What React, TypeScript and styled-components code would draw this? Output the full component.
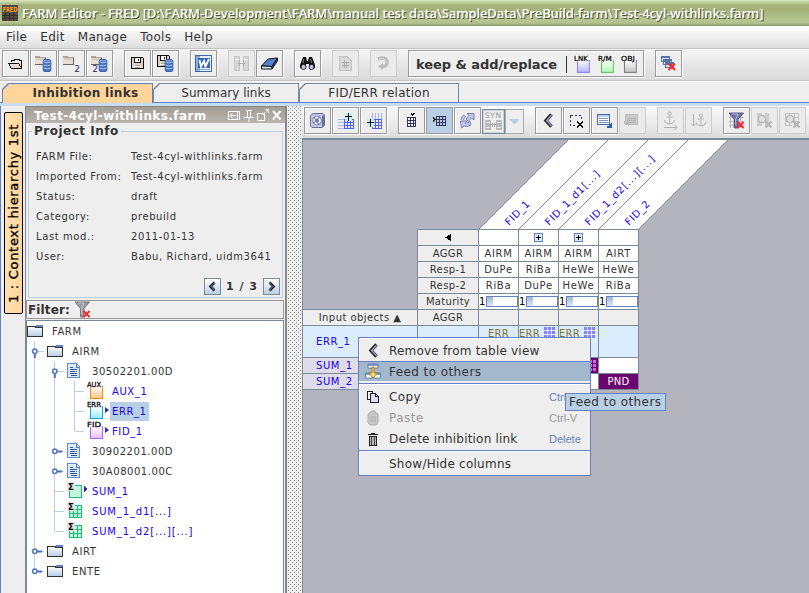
import React from 'react';
import styled, { createGlobalStyle, css } from 'styled-components';

const LINE = '#7a8a99';
const BLUE = '#6382bf';

const GlobalStyle = createGlobalStyle`
  * { box-sizing: border-box; }
  body { margin: 0; overflow: hidden; }
`;

const Window = styled.div`
  position: relative;
  width: 809px;
  height: 593px;
  overflow: hidden;
  display: flex;
  flex-direction: column;
  background: #eeeeee;
  color: #333333;
  font: 11px 'DejaVu Sans', sans-serif;
  white-space: pre;
  cursor: default;
`;

const Text = styled.span<{ $size?: number; $ls?: number; $bold?: boolean; $color?: string }>`
  font-size: ${(p) => p.$size ?? 11}px;
  letter-spacing: ${(p) => p.$ls ?? 0}px;
  font-weight: ${(p) => (p.$bold ? 700 : 400)};
  ${(p) => p.$color && `color: ${p.$color};`}
`;

/* ---------- title and menu ---------- */

const TitleBar = styled.header`
  display: flex;
  align-items: center;
  height: 26px;
  padding: 0 0 0 2px;
  gap: 4px;
  background: linear-gradient(#d9e5bb 0, #c4d3a0 2px, #a6b37c 5px, #a4b27a 10px, #b7c592 20px, #b3c28e 23px, #87966a 26px);
  color: #fff;
`;

const TitleText = styled.h1`
  margin: 0;
  font: 600 13px/20px 'Open Sans', sans-serif;
  letter-spacing: -0.13px;
  text-shadow: 1px 1px 0 #4b5530;
`;

const MenuBar = styled.nav`
  display: flex;
  height: 23px;
  padding: 3px 0 0 6px;
  gap: 13px;
  line-height: 16px;
  background: linear-gradient(#ffffff, #dedede);
  border-bottom: 1px solid #c4c4c4;
`;

/* ---------- toolbars ---------- */

const MainToolbar = styled.div`
  display: flex;
  height: 32px;
  padding: 1px 0 0 2px;
  gap: 11px;
  background: linear-gradient(#f4f4f4, #dadada);
  border-bottom: 1px solid #c4c4c4;
`;

const Group = styled.div`
  display: flex;
  gap: 1px;
`;

const ToolButton = styled.button<{ $disabled?: boolean; $pressed?: boolean }>`
  display: flex;
  align-items: center;
  justify-content: center;
  width: 27px;
  height: 27px;
  padding: 0;
  margin: 0;
  color: #333;
  background: #eeeeee;
  border: 1px solid #999999;
  box-shadow: 1px 1px 0 #fff, inset 1px 1px 0 #fff;
  ${(p) => p.$pressed && css`background: #b8cfe5; box-shadow: 1px 1px 0 #fff;`}
  ${(p) => p.$disabled && css`border-color: #cccccc; background: #ebebeb; box-shadow: none;`}
`;

const ModeButton = styled(ToolButton)`
  width: 236px;
  justify-content: flex-start;
  padding: 2px 0 0 7px;
  gap: 2px;
  font-family: inherit;
`;

const ModeDivider = styled.span`
  width: 1px;
  height: 17px;
  margin: 0 5px 0 7px;
  background: #333;
`;

/* ---------- tabs ---------- */

const TabStrip = styled.div`
  display: flex;
  height: 22px;
  padding: 1px 0 0 2px;
  border-bottom: 1px solid ${BLUE};
  border-top: 1px solid #fafafa;
`;

const TabShape = styled.div<{ $width: number; $active?: boolean }>`
  width: ${(p) => p.$width}px;
  height: ${(p) => (p.$active ? 20 : 19)}px;
  padding: 1px 1px 0 1px;
  background: ${(p) => (p.$active ? BLUE : LINE)};
  clip-path: polygon(0 6px, 6px 0, 100% 0, 100% 100%, 0 100%);
`;

const TabFace = styled.div<{ $active?: boolean }>`
  height: 100%;
  padding-left: ${(p) => (p.$active ? 16 : 0)}px;
  line-height: 18px;
  text-align: center;
  background: ${(p) => (p.$active ? '#ffd59c' : '#eeeeee')};
  clip-path: polygon(0 6px, 6px 0, 100% 0, 100% 100%, 0 100%);
`;

/* ---------- workspace ---------- */

const Workspace = styled.main`
  flex: 1;
  display: flex;
  min-height: 0;
  border-top: 3px solid #c8ddf2;
`;

const SideRail = styled.div`
  width: 25px;
  flex: none;
  padding: 6px 0 0 3px;
  border-left: 1px solid ${BLUE};
`;

const SideTab = styled.div`
  width: 19px;
  height: 202px;
  display: flex;
  align-items: center;
  justify-content: center;
  background: linear-gradient(90deg, #ffd59c, #ffe2b0);
  border: 1px solid #000;
  border-radius: 2px;
  color: #000;
  -webkit-text-stroke: 0.3px #000;
  writing-mode: vertical-rl;
  transform: rotate(180deg);
`;

const SidePanel = styled.section`
  width: 262px;
  flex: none;
  display: flex;
  flex-direction: column;
  border: 1px solid #888;
  border-bottom: 0;
  border-right-width: 2px;
`;

const PanelTitle = styled.div`
  height: 16px;
  flex: none;
  display: flex;
  align-items: center;
  justify-content: space-between;
  padding: 2px 4px 0 8px;
  background: linear-gradient(#a39d94, #b9b4ae);
`;

const InfoBox = styled.fieldset`
  margin: 1px 2px 0;
  padding: 0;
  height: 174px;
  flex: none;
  min-width: 0;
  border: 1px solid #b8cfe5;
  line-height: 15px;
`;

const InfoLegend = styled.legend`
  height: 15px;
  margin: 0 0 0 3px;
  padding: 0 2px;
  line-height: 15px;
`;

const InfoGrid = styled.dl`
  display: grid;
  grid-template-columns: 95px 1fr;
  grid-auto-rows: 20px;
  margin: 8px 0 0 7px;
  line-height: 20px;
`;

const InfoTerm = styled.dt`
  margin: 0;
`;

const InfoValue = styled.dd`
  margin: 0;
`;

const Pager = styled.div`
  display: flex;
  align-items: center;
  justify-content: flex-end;
  gap: 5px;
  margin: 11px 2px 0 0;
`;

const PagerButton = styled.button`
  width: 17px;
  height: 17px;
  padding: 0;
  display: flex;
  align-items: center;
  justify-content: center;
  border: 1px solid ${LINE};
  background: linear-gradient(#ffffff, #b8cfe5);
`;

const FilterBar = styled.div`
  display: flex;
  align-items: center;
  flex: none;
  height: 19px;
  margin: 2px 1px 1px 0;
  padding-left: 1px;
  gap: 4px;
  border: 1px solid #999;
`;

const Tree = styled.ul`
  flex: 1;
  list-style: none;
  margin: 0 1px 0 0;
  padding: 0;
  background: #fff;
  border: 1px solid ${LINE};
  border-bottom: 0;
`;

const TreeRow = styled.li`
  display: flex;
  align-items: center;
  height: 20px;
`;

const TreeLabel = styled.span<{ $link?: boolean; $selected?: boolean }>`
  padding: 0 2px;
  line-height: 19px;
  color: ${(p) => (p.$link ? '#1a00f0' : '#333')};
  ${(p) => p.$selected && 'background: #b8cfe5;'}
`;

const IconSlot = styled.span`
  width: 23px;
  height: 20px;
  flex: none;
  display: flex;
  align-items: center;
`;

const Splitter = styled.div`
  width: 15px;
  flex: none;
  background-color: #eee;
  background-image: radial-gradient(circle at 0.5px 0.5px, #868686 0.6px, transparent 0.7px),
    radial-gradient(circle at 2.5px 2.5px, #868686 0.6px, transparent 0.7px);
  background-size: 4px 4px;
  border: 1px solid #eee;
  border-width: 0 1px;
`;

const Editor = styled.section`
  flex: 1;
  display: flex;
  flex-direction: column;
  min-width: 0;
`;

const TableToolbar = styled.div`
  display: flex;
  height: 32px;
  padding: 1px 0 0 2px;
  gap: 11px;
  background: linear-gradient(#fbfbfb, #dcdcdc);
`;

const SyncGroup = styled.div`
  display: flex;
  height: 25px;
  width: 42px;
`;

const SyncPart = styled.button<{ $wide?: boolean }>`
  width: ${(p) => (p.$wide ? 23 : 19)}px;
  height: 25px;
  margin-top: 2px;
  padding: 0;
  display: flex;
  align-items: center;
  justify-content: center;
  background: #eee;
  border: 1px solid ${(p) => (p.$wide ? LINE : '#aaa')};
  box-shadow: ${(p) => (p.$wide ? 'inset 0 0 0 1px #c4d5e6' : 'none')};
`;

const Canvas = styled.div`
  flex: 1;
  background: #b4b4bf;
  border-top: 2px solid ${LINE};
  border-left: 1px solid ${LINE};
`;

const SlantedHeader = styled.svg`
  display: block;
  width: 426px;
  height: 90px;
`;

const Matrix = styled.div`
  display: grid;
  width: 336px;
  grid-template-columns: 115px 61px repeat(4, 40px);
  grid-template-rows: repeat(6, 16px) 32px 16px 16px;
`;

const Cell = styled.div<{ $bg?: string }>`
  display: flex;
  align-items: center;
  justify-content: center;
  overflow: hidden;
  min-width: 0;
  line-height: 13px;
  background: ${(p) => p.$bg ?? '#fff'};
  border-right: 1px solid ${LINE};
  border-bottom: 1px solid ${LINE};
`;

const RowName = styled(Cell)`
  justify-content: flex-start;
  padding-left: 13px;
  color: #1a00f0;
`;

const ErrCell = styled(Cell)<{ $center?: boolean }>`
  align-items: flex-start;
  justify-content: ${(p) => (p.$center ? 'center' : 'flex-start')};
  gap: 4px;
  padding-top: 1px;
  color: #7d7636;
`;

const DotsCell = styled(Cell)`
  justify-content: flex-end;
  padding-right: 2px;
`;

const Corner = styled.div`
  grid-row: 1 / 6;
  grid-column: 1;
  border-right: 1px solid ${LINE};
  border-bottom: 1px solid ${LINE};
`;

const PlusBox = styled.span`
  width: 9px;
  height: 9px;
  border: 1px solid ${BLUE};
  background: linear-gradient(#000, #000) center / 5px 1px no-repeat, linear-gradient(#000, #000) center / 1px 5px no-repeat, #dce8f5;
`;

const MaturityCell = styled(Cell)`
  gap: 1px;
  justify-content: flex-start;
  color: #000;
`;

const MaturityTrack = styled.span`
  flex: none;
  width: 32px;
  height: 11px;
  border: 1px solid ${BLUE};
  background: #fff;
`;

const MaturityFill = styled.span`
  display: block;
  width: 6px;
  height: 9px;
  background: linear-gradient(#a0b8d0, #e3ebf3);
`;

/* ---------- popup ---------- */

const ContextMenu = styled.div`
  position: absolute;
  left: 358px;
  top: 337px;
  width: 233px;
  height: 139px;
  border: 1px solid ${BLUE};
  background: #eee;
  box-shadow: inset 1px 1px 0 #fff;
  padding-top: 2px;
`;

const MenuItem = styled.div<{ $selected?: boolean; $disabled?: boolean }>`
  display: grid;
  grid-template-columns: 30px 160px 1fr;
  align-items: center;
  height: 21px;
  color: ${(p) => (p.$disabled ? '#999' : '#333')};
  ${(p) => p.$selected && css`
    height: 20px;
    background: #a3b8cc;
    border-top: 1px solid ${BLUE};
  `}
`;

const ItemIcon = styled.span`
  display: flex;
  width: 16px;
  height: 18px;
  margin-left: 6px;
  align-items: center;
  justify-content: center;
`;

const Shortcut = styled.span<{ $disabled?: boolean }>`
  font: 11px 'Liberation Sans', sans-serif;
  color: ${(p) => (p.$disabled ? '#999' : BLUE)};
`;

const MenuRule = styled.div<{ $top: number; $bottom: number }>`
  height: 2px;
  margin: ${(p) => p.$top}px 0 ${(p) => p.$bottom}px;
  border-top: 1px solid ${BLUE};
  background: #fff;
`;

const Tooltip = styled.div`
  position: absolute;
  left: 565px;
  top: 393px;
  width: 101px;
  height: 18px;
  padding-left: 3px;
  line-height: 17px;
  border: 1px solid ${BLUE};
  background: #b8cfe5;
`;

/* ---------- icons ---------- */

type SvgProps = { w?: number; h?: number; children: React.ReactNode };
const Glyph = ({ w = 17, h = 17, children }: SvgProps) => (
  <svg width={w} height={h} viewBox={`0 0 ${w} ${h}`} shapeRendering="crispEdges" fill="none">
    {children}
  </svg>
);

const Smooth = ({ w = 17, h = 17, children }: SvgProps) => (
  <svg width={w} height={h} viewBox={`0 0 ${w} ${h}`} fill="none">
    {children}
  </svg>
);

const Drum = ({ x = 8, y = 4 }: { x?: number; y?: number }) => (
  <g transform={`translate(${x} ${y})`}>
    <path d="M0 2Q0 0 4 0T8 2V11Q8 13 4 13T0 11Z" fill="#4a72bf" stroke="#2c4f93" strokeWidth=".6" />
    <path d="M.5 3Q4 4.800 7.500 3M.5 6Q4 7.800 7.500 6M.5 9Q4 10.800 7.500 9" stroke="#a6c2ee" strokeWidth="1" />
    <path d="M1 1.800H7" stroke="#8fb0e6" />
  </g>
);

const SmallFolder = () => (
  <g shapeRendering="crispEdges">
    <path d="M0 1H6V2H11V10H0Z" fill="#eaddd5" />
    <path d="M0 9V1H5V2H11V3H0" fill="#b3a49b" />
    <path d="M1 3H10V5H1Z" fill="#d9cac0" />
    <path d="M10.500 3V9.500H0" stroke="#666" />
  </g>
);

const OpenFolder = () => (
  <Glyph w={15} h={13}>
    <path d="M4 4H7V3H12V5H13V11H3V9H1V6H11V4" fill="#e9ddd5" />
    <path d="M3.500 5V3.500H6.500V2.500H11.500V3.500H13.500V11.500H3.500L.5 6.500H10.500L13.500 11" stroke="#111" />
  </Glyph>
);

const SubDigit = ({ x }: { x: number }) => (
  <text x={x} y={17} fontSize="8.500" fill="#222266" fontFamily="DejaVu Sans">2</text>
);

const FolderDb = () => <Smooth><SmallFolder /><Drum /></Smooth>;
const FolderTwo = () => <Smooth><SmallFolder /><SubDigit x={11.5} /></Smooth>;
const FolderTwoDb = () => <Smooth><SmallFolder /><Drum /><SubDigit x={1.5} /></Smooth>;

const Floppy = () => (
  <g shapeRendering="crispEdges">
    <path d="M.5 .5H11.500L12.500 1.500V11.500H.5Z" fill="#dfd0c6" stroke="#111" />
    <path d="M3.500 .5H9.500V5.500H3.500Z" fill="#fff" stroke="#111" />
    <path d="M7 2H8V4H7Z" fill="#111" />
    <path d="M3 8H10V11H3Z" fill="#f6efeb" />
    <path d="M4 8.500H9M4 10.500H9" stroke="#aaa" />
  </g>
);
const Save = () => <Glyph w={13} h={13}><Floppy /></Glyph>;
const SaveDb = () => <Smooth><Floppy /><Drum /></Smooth>;

const Word = () => (
  <Smooth>
    <rect x=".5" y=".5" width="16" height="16" fill="#e8f0fa" stroke="#3d67ae" />
    <rect x="1" y="1" width="4" height="15" fill="#8badde" />
    <path d="M3 3H15V13H3Z" fill="#3766b6" />
    <path d="M4.500 5L6 11.500L9 6L10.500 11.500L14 4" stroke="#fff" strokeWidth="1.900" />
    <path d="M4 14.500H15" stroke="#85a7da" />
  </Smooth>
);

const GrayLink = () => (
  <Glyph>
    <path d="M1.500 1.500H6.500V15.500H1.500ZM10.500 1.500H15.500V15.500H10.500Z" fill="#d6d6d6" stroke="#c6c6c6" />
    <path d="M5 8.500H12M6.500 6V11M10.500 6V11" stroke="#b0b0b0" />
    <path d="M2 4.500H6M11 4.500H15" stroke="#eee" />
  </Glyph>
);

const Eraser = () => (
  <Smooth>
    <path d="M.5 11L7 4L16.500 3L11 11.500Z" fill="#5482ce" stroke="#111" />
    <path d="M.5 11L11 11.500V14H.5Z" fill="#dce7f8" stroke="#111" />
    <path d="M11 11.500L16.500 3V6L11 14Z" fill="#335ba5" stroke="#111" />
  </Smooth>
);

const Binoculars = () => (
  <Smooth w={15} h={15}>
    <path d="M3 1H6L7 5H8L9 1H12L15 9V12H9V8H6V12H0V9Z" fill="#111" />
    <circle cx="3.500" cy="11" r="2.500" fill="#c9c9ee" stroke="#222" />
    <circle cx="11.500" cy="11" r="2.500" fill="#c9c9ee" stroke="#222" />
    <path d="M4 3L3 7M10.500 3L11.500 7" stroke="#888" />
  </Smooth>
);

const GrayPage = () => (
  <Glyph w={15} h={15}>
    <path d="M1.500 .5H9.500L13.500 4.500V14.500H1.500Z" fill="#d9d9d9" stroke="#c2c2c2" />
    <path d="M4 6.500H11M4 9.500H11M6.500 4V12M8.500 6V12" stroke="#acacac" />
  </Glyph>
);

const GrayRedo = () => (
  <Smooth w={15} h={15}>
    <path d="M2 3Q11 0 11 6.500Q11 11 6 10.500" stroke="#bcbcbc" strokeWidth="3.500" />
    <path d="M7 7V14L2 10.500Z" fill="#bcbcbc" />
    <path d="M3 3Q10 1 10.500 7" stroke="#dcdcdc" />
  </Smooth>
);

const Tagged = ({ tag, fill, line, arrow }: { tag: string; fill: string; line: string; arrow?: boolean }) => (
  <svg width="22" height="20" viewBox="0 0 22 20">
    <defs>
      <linearGradient id={`g-${tag[0]}${tag[1]}`} x2="0" y2="1">
        <stop stopColor="#fff" />
        <stop offset="1" stopColor={fill} />
      </linearGradient>
    </defs>
    <rect x="3.500" y="5.500" width="12" height="12" fill={`url(#g-${tag[0]}${tag[1]})`} stroke={line} />
    <path d="M0 0H15V6H0Z" fill="#fff" fillOpacity=".75" />
    <text x="0" y="6" fontSize="7" fill="#000" stroke="#000" strokeWidth=".25" fontFamily="DejaVu Sans" textLength="14" lengthAdjust="spacingAndGlyphs">{tag}</text>
    {arrow && <path d="M18 6V12L22 9Z" fill="#2b2bb5" />}
  </svg>
);

const CloseAll = () => (
  <Glyph w={15} h={15}>
    <path d="M.5 .5H8.500V5.500H.5ZM2.500 3.500H10.500V8.500H2.500ZM4.500 6.500H12.500V11.500H4.500Z" fill="#d6e3f4" stroke="#5274aa" />
    <path d="M0 1.500H8M2 4.500H10M4 7.500H12" stroke="#5274aa" />
    <path d="M7.500 7.500L14 14M14 7.500L7.500 14" stroke="#f22" strokeWidth="2" shapeRendering="auto" />
  </Glyph>
);

const Reload = () => (
  <Smooth>
    <path d="M1.500 3.500L4 1.500H14L15.500 3V13.500L13 15.500H3L1.500 14Z" fill="#c3c6e4" stroke="#6c7094" />
    <path d="M13 4L15 3V13.500L13 15Z" fill="#6c7094" />
    <circle cx="8" cy="8.500" r="4.800" fill="#767da8" />
    <circle cx="8" cy="8.500" r="3" stroke="#f2f2ff" strokeWidth="1.800" strokeDasharray="3 1" />
  </Smooth>
);

const GridPlus = ({ left }: { left?: boolean }) => (
  <Glyph>
    <path d={left ? 'M7.500 1V8M10.500 1V8M13.500 1V8M16.500 1V8' : 'M1 7.500H7M1 10.500H7M1 13.500H7M1 16.500H7'} stroke="#a3b4ff" />
    <path d="M7 7.500H17M7 10.500H17M7 13.500H17M7 16.500H17M7.500 7V17M10.500 7V17M13.500 7V17M16.500 7V17" stroke="#5060f4" />
    <g transform={left ? 'translate(-6 6)' : 'translate(0 0)'}>
      <path d="M8 1H15V9H8Z" fill="#c7eef5" />
      <path d="M11.500 1V9M8 4.500H15" stroke="#111" />
    </g>
  </Glyph>
);

const TableCol = () => (
  <Glyph w={15} h={15}>
    <path d="M3.500 4.500H11.500V13.500H3.500ZM6.500 4V14M9.500 4V14M3 7.500H12M3 10.500H12" stroke="#33335c" />
    <path d="M7 0H8V1H9V0H11V1H10V2H9V3H8V2H7Z" fill="#000" />
  </Glyph>
);

const TableRowIcon = () => (
  <Glyph w={15} h={13}>
    <path d="M4.500 2.500H13.500V11.500H4.500ZM7.500 3V12M10.500 3V12M4 5.500H14M4 8.500H14" stroke="#33335c" />
    <path d="M1 3H2V4H3V5H4V6H3V7H2V8H1V6H2V5H1Z" fill="#000" />
  </Glyph>
);

const Sync = () => (
  <Smooth>
    <path d="M8 1.500H15V8L12.800 6Q10 7.500 9.500 9.500L7 7Q8 5 10 3.500Z" fill="#c2c6ea" stroke="#7a7eaf" />
    <path d="M1.500 9H8L6.500 11Q9 11.500 11 9.500L12 13Q9 15.500 5 14L2.500 16Z" fill="#c2c6ea" stroke="#7a7eaf" />
    <path d="M2 8Q2 4 5 3L6.500 5Q4.500 6 4.500 8" fill="#c2c6ea" stroke="#7a7eaf" strokeWidth=".8" />
  </Smooth>
);

const SynIcon = () => (
  <Glyph w={17} h={21}>
    <text x="0" y="7" fontSize="7.500" fill="#aaa" stroke="#aaa" strokeWidth=".2" fontFamily="DejaVu Sans" textLength="16">SYN</text>
    <path d="M0 9H6V19H0ZM11 9H17V19H11Z" fill="#bababa" />
    <path d="M1 11.500H5M1 16.500H5M12 11.500H16M12 16.500H16" stroke="#e5e5e5" />
    <path d="M5 13.500H12M7.500 12V16M9.500 12V16" stroke="#aaa" />
  </Glyph>
);

const Chevron = () => (
  <svg width="11" height="15" viewBox="0 0 11 15" fill="none">
    <path d="M8.500 1.500L3 7.500L8.500 13.500" stroke="#222" strokeWidth="3.400" />
    <path d="M8.500 2.200L3.700 7.500L8.500 12.800" stroke="#9c9cc8" strokeWidth="1.500" />
  </svg>
);

const SmallChevron = ({ right }: { right?: boolean }) => (
  <svg width="9" height="11" viewBox="0 0 9 11" fill="none">
    <g transform={right ? 'matrix(-1 0 0 1 9 0)' : undefined}>
      <path d="M6.500 1.500L2.500 5.500L6.500 9.500" stroke="#111" strokeWidth="2.600" />
      <path d="M6.500 2L3 5.500L6.500 9" stroke="#8a8ac0" strokeWidth="1" />
    </g>
  </svg>
);

const Deselect = () => (
  <Glyph>
    <rect x="2.500" y="3.500" width="11" height="10" stroke="#33335c" strokeDasharray="2 2" />
    <path d="M8 9H16V16H8Z" fill="#eee" />
    <path d="M9 9.500L15 15.500M15 9.500L9 15.500" stroke="#000" strokeWidth="1.800" />
  </Glyph>
);

const ListIcon = ({ gray }: { gray?: boolean }) => (
  <Glyph>
    <path d="M1.500 2.500H13.500V12.500H1.500Z" fill={gray ? '#cacaca' : '#fff'} stroke={gray ? '#bdbdbd' : '#46689f'} />
    {!gray && <path d="M2 3H13V5H2Z" fill="#b5cdf0" />}
    <path d="M3 6.500H12M3 8.500H12M3 10.500H12" stroke={gray ? '#b4b4b4' : '#7892bc'} />
    {gray ? <path d="M0 9H4V6L5 6V14H4V12H0Z" fill="#bdbdbd" /> : <path d="M16 11V16H11V14H13V12Z" fill="#2c60aa" />}
  </Glyph>
);

const Anchor = ({ down }: { down?: boolean }) => (
  <Smooth w={17} h={19}>
    <g transform={down ? 'translate(3 2)' : 'translate(-.5 0)'} stroke="#bcbcbc" strokeWidth="1.200">
      <circle cx="8" cy="2.500" r="1.500" />
      <path d="M8 4V13M5 6H11M3 9Q3.500 12.500 8 12.800Q12.500 12.500 13 9" />
    </g>
    <path d={down ? 'M3.500 3V15M1 12.500L3.500 15L6 12.500' : 'M2 16.500H15M12.500 14L15 16.500L12.500 19'} stroke="#b2b2b2" />
  </Smooth>
);

const Funnel = ({ grid }: { grid?: boolean }) => (
  <svg width="17" height="17" viewBox="0 0 17 17" fill="none">
    {grid && <path d="M1 5.500H16M1 9.500H16M1 13.500H16M2.500 2V16M5.500 2V16M12.500 2V16" stroke="#b9b9b9" />}
    <path d="M1 1H15.500L10 7.500V16H6.500V7.500Z" fill={grid ? '#7474a8' : '#9a9aa5'} stroke={grid ? '#3c3c77' : '#666'} strokeWidth=".8" />
    <path d="M4 2H10L7.700 7V13" stroke="#e2e2ee" strokeOpacity=".6" strokeWidth="1" />
    <path d="M9.500 10L15.500 16M15.500 10L9.500 16" stroke="#f22" strokeWidth="1.900" />
  </svg>
);

const GraySearch = ({ grid }: { grid?: boolean }) => (
  <Smooth>
    {grid ? <path d="M1 1.500H15M1 5.500H15M1 9.500H15M1 13.500H8M1.500 2V14M5.500 2V14M10.500 2V14M14.500 2V8" stroke="#c2c2c2" /> : <path d="M1 1H6V14H1ZM9 1H13V14H9Z" fill="#cecece" />}
    <circle cx="6" cy="7" r="3.500" fill="#e0e0e0" stroke="#b5b5b5" strokeWidth="1.200" />
    <path d="M9.500 9.500L15.500 15.500M15.500 9.500L9.500 15.500" stroke="#b5b5b5" strokeWidth="2.200" />
  </Smooth>
);

const AppLogo = () => (
  <svg width="16" height="16" viewBox="0 0 16 16">
    <rect width="16" height="16" fill="#514b44" />
    <path d="M0 10.500H16M0 13.500H16M3.500 8V16M7.500 8V16M11.500 8V16" stroke="#33302c" />
    <text x=".5" y="7" fontSize="7" fontWeight="700" fill="#ff981c" fontFamily="DejaVu Sans" textLength="15" lengthAdjust="spacingAndGlyphs">FRED</text>
  </svg>
);

const PanelControls = () => (
  <svg width="54" height="14" viewBox="0 0 54 14" fill="none" stroke="#fff">
    <path d="M1.500 2.500H12.500V10.500H1.500ZM10.500 2V11M3 6.500H9M5.500 4L3 6.500L5.500 9" />
    <path d="M19 1.500H25M20.500 2V8M23.500 2V8M17 8.500H27M22 9V13" />
    <path d="M30.500 4.500H37.500V11.500H30.500ZM36 6L41 1M38 .5H41.500V4" />
    <path d="M46 2L53.500 10.500M53.500 2L46 10.500" strokeWidth="2" />
  </svg>
);

const FolderIcon = () => (
  <Glyph w={17} h={15}>
    <defs>
      <linearGradient id="folder" x2="0" y2="1"><stop stopColor="#fff" /><stop offset="1" stopColor="#b5cbe4" /></linearGradient>
    </defs>
    <path d="M.5 2.500H7.500L9.500 3.500H15.500V12.500H.5Z" fill="url(#folder)" stroke="#333" />
    <path d="M9 1H16V3H9Z" fill={BLUE} />
  </Glyph>
);

const DocIcon = () => (
  <Glyph w={14} h={16}>
    <path d="M.5 .5H9.500L12.500 3.500V14.500H.5Z" fill="#dce9fa" stroke="#5d8bd2" />
    <path d="M9.500 1V4H12" stroke="#4d7fcc" />
    <path d="M3 4.500H6M3 6.500H10M3 8.500H8M9 8.500H10M3 10.500H10M4 12.500H10" stroke="#2b52a3" />
  </Glyph>
);

const SumIcon = ({ grid }: { grid?: boolean }) => (
  <Glyph w={21} h={18}>
    <rect x="2.500" y="3.500" width="12" height="12" fill="#c2f8dc" stroke="#14bd78" />
    {grid && <path d="M3 7.500H15M3 11.500H15M6.500 4V16M10.500 4V16" stroke="#14bd78" />}
    <rect x="0" y="0" width="8" height="9" fill="#e4e4e4" />
    <text x="1" y="7.500" fontSize="8.500" fontWeight="700" fill="#000" fontFamily="DejaVu Sans">Σ</text>
    {!grid && <path d="M17 4V10L21 7Z" fill="#2b2bb5" />}
  </Glyph>
);

const Dots = ({ color = '#8a80f5', w = 11 }: { color?: string; w?: number }) => (
  <Glyph w={w} h={11}>
    {[0, 4, 8].map((y) => [0, 4, 8].map((x) => <rect key={`${x}-${y}`} x={x} y={y} width="3" height="3" fill={color} />))}
  </Glyph>
);

const FeedIcon = () => (
  <Smooth w={16} h={18}>
    <path d="M3 1H13V5H3ZM.5 10H7V15H.5ZM9 10H15.500V15H9Z" fill="#fff" stroke="#4d719f" strokeWidth=".8" />
    <path d="M3 2H13M0 11H7M9 11H16" stroke="#537cb5" strokeWidth="1.500" />
    <path d="M7 4H9V10H12L8 15L4 10H7Z" fill="#ffe27a" stroke="#b67d10" />
  </Smooth>
);

const CopyIcon = () => (
  <Glyph w={14} h={14}>
    <path d="M1.500 1.500H6.500V9.500H1.500Z" fill="#fff" stroke="#222" />
    <path d="M4.500 3.500H9.500L12.500 6.500V12.500H4.500Z" fill="#dcdcf2" stroke="#222" />
    <path d="M9.500 3V6.500H13" stroke="#222" />
  </Glyph>
);

const PasteIcon = () => (
  <Smooth w={12} h={16}>
    <path d="M1 4L4 2V1H8V2L11 4V13L9 15H3L1 13Z" fill="#c6c6c6" stroke="#b0b0b0" />
    <path d="M3 7H9M3 9H9M3 11H9" stroke="#b2b2b2" />
  </Smooth>
);

const TrashIcon = () => (
  <Glyph w={12} h={14}>
    <path d="M1 2.500H11M4 1.500H8" stroke="#222" />
    <path d="M2.500 4.500H9.500V13H2.500Z" fill="#bbb" stroke="#222" />
    <path d="M4.500 5V13M7.500 5V13" stroke="#444" />
  </Glyph>
);

/* ---------- tree ---------- */

type Guide = 'line' | 'tee' | 'end' | 'open' | 'shut' | 'shutEnd';

const GuideCell = ({ kind }: { kind: Guide }) => (
  <svg width="20" height="20" viewBox="0 0 20 20" fill="none">
    <path d={kind === 'end' || kind === 'shutEnd' ? 'M7.500 0V10' : 'M7.500 0V20'} stroke="#b8cfe5" />
    {kind !== 'line' && <path d="M8 10.500H17" stroke="#b8cfe5" />}
    {(kind === 'open' || kind === 'shut' || kind === 'shutEnd') && (
      <>
        <path d={kind === 'open' ? 'M7.800 12V17' : 'M10 10.500H15'} stroke="#4d6fb5" strokeWidth="2" />
        <circle cx="7.800" cy="10.300" r="2.200" fill="#fff" stroke="#5a7dc0" strokeWidth="1.700" />
      </>
    )}
  </svg>
);

type Node = { guides: Guide[]; icon: React.ReactNode; label: string; link?: boolean; selected?: boolean; ls?: number };

const nodes: Node[] = [
  { guides: [], icon: <FolderIcon />, label: 'FARM' },
  { guides: ['open'], icon: <FolderIcon />, label: 'AIRM' },
  { guides: ['line', 'open'], icon: <DocIcon />, label: '30502201.00D', ls: 0.55 },
  { guides: ['line', 'line', 'tee'], icon: <Tagged tag="AUX" fill="#ffc680" line="#f08a20" />, label: 'AUX_1', link: true },
  { guides: ['line', 'line', 'tee'], icon: <Tagged tag="ERR" fill="#9eeaff" line="#10a4dc" arrow />, label: 'ERR_1', link: true, selected: true },
  { guides: ['line', 'line', 'end'], icon: <Tagged tag="FID" fill="#e4bcff" line="#a866ee" arrow />, label: 'FID_1', link: true },
  { guides: ['line', 'shut'], icon: <DocIcon />, label: '30902201.00D', ls: 0.55 },
  { guides: ['line', 'shut'], icon: <DocIcon />, label: '30A08001.00C', ls: 0.55 },
  { guides: ['line', 'tee'], icon: <SumIcon />, label: 'SUM_1', link: true },
  { guides: ['line', 'tee'], icon: <SumIcon grid />, label: 'SUM_1_d1[...]', link: true, ls: 0.85 },
  { guides: ['line', 'end'], icon: <SumIcon grid />, label: 'SUM_1_d2[...][...]', link: true, ls: 0.85 },
  { guides: ['shut'], icon: <FolderIcon />, label: 'AIRT' },
  { guides: ['shutEnd'], icon: <FolderIcon />, label: 'ENTE' },
];

const info: [string, string][] = [
  ['FARM File:', 'Test-4cyl-withlinks.farm'],
  ['Imported From:', 'Test-4cyl-withlinks.farm'],
  ['Status:', 'draft'],
  ['Category:', 'prebuild'],
  ['Last mod.:', '2011-01-13'],
  ['User:', 'Babu, Richard, uidm3641'],
];

const headerRows: [string, string[]][] = [
  ['AGGR', ['AIRM', 'AIRM', 'AIRM', 'AIRT']],
  ['Resp-1', ['DuPe', 'RiBa', 'HeWe', 'HeWe']],
  ['Resp-2', ['RiBa', 'DuPe', 'HeWe', 'RiBa']],
];

const slanted = ['FID_1', 'FID_1_d1[...]', 'FID_1_d2[...][...]', 'FID_2'];

const GRAY = '#eeeeee';
const SKY = '#dbecfc';
const LILAC = '#dedce8';
const PURPLE = '#6b0570';

export default function App() {
  return (
    <Window>
      <GlobalStyle />
      <TitleBar>
        <AppLogo />
        <TitleText>FARM Editor - FRED [D:\FARM-Development\FARM\manual test data\SampleData\PreBuild-farm\Test-4cyl-withlinks.farm]</TitleText>
      </TitleBar>
      <MenuBar>
        {['File', 'Edit', 'Manage', 'Tools', 'Help'].map((m) => <Text key={m} $size={12} $ls={0.3}>{m}</Text>)}
      </MenuBar>
      <MainToolbar>
        <Group>
          <ToolButton><OpenFolder /></ToolButton>
          <ToolButton><FolderDb /></ToolButton>
          <ToolButton><FolderTwo /></ToolButton>
          <ToolButton><FolderTwoDb /></ToolButton>
        </Group>
        <Group>
          <ToolButton><Save /></ToolButton>
          <ToolButton><SaveDb /></ToolButton>
        </Group>
        <ToolButton><Word /></ToolButton>
        <Group>
          <ToolButton $disabled><GrayLink /></ToolButton>
          <ToolButton><Eraser /></ToolButton>
        </Group>
        <ToolButton><Binoculars /></ToolButton>
        <ToolButton $disabled><GrayPage /></ToolButton>
        <ToolButton $disabled><GrayRedo /></ToolButton>
        <ModeButton>
          <Text $size={13} $bold $ls={-0.06}>keep &amp; add/replace</Text>
          <ModeDivider />
          <Tagged tag="LNK" fill="#b0b0ff" line="#8080e8" />
          <Tagged tag="R/M" fill="#aaf5aa" line="#55bb66" />
          <Tagged tag="OBJ" fill="#c0c0c0" line="#777777" />
        </ModeButton>
        <ToolButton><CloseAll /></ToolButton>
      </MainToolbar>
      <TabStrip>
        <TabShape $width={151} $active><TabFace $active><Text $size={12} $bold $ls={0.3}>Inhibition links</Text></TabFace></TabShape>
        <TabShape $width={146}><TabFace><Text $size={12}>Summary links</Text></TabFace></TabShape>
        <TabShape $width={160}><TabFace><Text $size={12} $ls={0.25}>FID/ERR relation</Text></TabFace></TabShape>
      </TabStrip>
      <Workspace>
        <SideRail>
          <SideTab><Text $size={13} $ls={0.7}>1 : Context hierarchy 1st</Text></SideTab>
        </SideRail>
        <SidePanel>
          <PanelTitle>
            <Text $size={12} $bold $ls={0.42} $color="#fff">Test-4cyl-withlinks.farm</Text>
            <PanelControls />
          </PanelTitle>
          <InfoBox>
            <InfoLegend><Text $size={12} $bold $ls={0.5}>Project Info</Text></InfoLegend>
            <InfoGrid>
              {info.map(([k, v]) => (
                <React.Fragment key={k}>
                  <InfoTerm><Text $size={10} $ls={0.6}>{k}</Text></InfoTerm>
                  <InfoValue><Text $size={10} $ls={0.58}>{v}</Text></InfoValue>
                </React.Fragment>
              ))}
            </InfoGrid>
            <Pager>
              <PagerButton><SmallChevron /></PagerButton>
              <Text $size={11} $bold $ls={1}>1 / 3</Text>
              <PagerButton><SmallChevron right /></PagerButton>
            </Pager>
          </InfoBox>
          <FilterBar>
            <Text $size={12} $bold $ls={0.15}>Filter:</Text>
            <Funnel />
          </FilterBar>
          <Tree>
            {nodes.map((n) => (
              <TreeRow key={n.label}>
                {n.guides.map((g, i) => <GuideCell key={i} kind={g} />)}
                <IconSlot>{n.icon}</IconSlot>
                <TreeLabel $link={n.link} $selected={n.selected}><Text $size={10} $ls={n.ls ?? 0.6}>{n.label}</Text></TreeLabel>
              </TreeRow>
            ))}
          </Tree>
        </SidePanel>
        <Splitter />
        <Editor>
          <TableToolbar>
            <Group>
              <ToolButton><Reload /></ToolButton>
              <ToolButton><GridPlus /></ToolButton>
              <ToolButton><GridPlus left /></ToolButton>
            </Group>
            <Group>
              <ToolButton><TableCol /></ToolButton>
              <ToolButton $pressed><TableRowIcon /></ToolButton>
              <ToolButton><Sync /></ToolButton>
              <SyncGroup>
                <SyncPart $wide><SynIcon /></SyncPart>
                <SyncPart>
                  <Smooth w={11} h={6}><path d="M0 0H11L5.500 5.500Z" fill="#b8cfe5" /></Smooth>
                </SyncPart>
              </SyncGroup>
            </Group>
            <Group>
              <ToolButton><Chevron /></ToolButton>
              <ToolButton><Deselect /></ToolButton>
              <ToolButton><ListIcon /></ToolButton>
              <ToolButton $disabled><ListIcon gray /></ToolButton>
            </Group>
            <Group>
              <ToolButton $disabled><Anchor /></ToolButton>
              <ToolButton $disabled><Anchor down /></ToolButton>
            </Group>
            <Group>
              <ToolButton><Funnel grid /></ToolButton>
              <ToolButton $disabled><GraySearch /></ToolButton>
              <ToolButton $disabled><GraySearch grid /></ToolButton>
            </Group>
          </TableToolbar>
          <Canvas>
            <SlantedHeader viewBox="0 0 426 90">
              <path d="M175.500 89.500L265 0H425L335.500 89.500Z" fill="#fff" />
              <path d="M175.500 89.500L265 0M215.500 89.500L305 0M255.500 89.500L345 0M295.500 89.500L385 0M335.500 89.500L425 0M114 89.500H336" stroke={LINE} fill="none" />
              {slanted.map((s, i) => (
                <text key={s} transform={`translate(${206 + i * 40} 86) rotate(-45)`} fontSize="10" letterSpacing={s.length > 5 ? 0.8 : 0.6} fill="#1a00f0" fontFamily="DejaVu Sans">{s}</text>
              ))}
            </SlantedHeader>
            <Matrix>
              <Corner />
              <Cell $bg={GRAY}><Glyph w={6} h={7}><path d="M6 0V7L0 3.500Z" fill="#000" /></Glyph></Cell>
              <Cell />
              <Cell><PlusBox /></Cell>
              <Cell><PlusBox /></Cell>
              <Cell />
              {headerRows.map(([name, values]) => (
                <React.Fragment key={name}>
                  <Cell $bg={GRAY}><Text $size={10} $ls={0.4}>{name}</Text></Cell>
                  {values.map((v, i) => <Cell key={i}><Text $size={10} $ls={0.7}>{v}</Text></Cell>)}
                </React.Fragment>
              ))}
              <Cell $bg={GRAY}><Text $size={10} $ls={0.3}>Maturity</Text></Cell>
              {slanted.map((s) => (
                <MaturityCell key={s}><Text $size={10}>1</Text><MaturityTrack><MaturityFill /></MaturityTrack></MaturityCell>
              ))}
              <Cell $bg={GRAY}><Text $size={10} $ls={0.45}>Input objects ▲</Text></Cell>
              <Cell $bg={GRAY}><Text $size={10} $ls={0.3}>AGGR</Text></Cell>
              {slanted.map((s) => <Cell key={s} $bg={GRAY} />)}
              <RowName $bg={SKY}><Text $size={10} $ls={0.6}>ERR_1</Text></RowName>
              <Cell $bg={SKY} />
              <ErrCell $bg={SKY} $center><Text $size={10} $ls={0.3}>ERR</Text></ErrCell>
              <ErrCell $bg={SKY}><Text $size={10} $ls={0.3}>ERR</Text><Dots /></ErrCell>
              <ErrCell $bg={SKY}><Text $size={10} $ls={0.3}>ERR</Text><Dots /></ErrCell>
              <Cell $bg={SKY} />
              <RowName $bg={LILAC}><Text $size={10} $ls={0.6}>SUM_1</Text></RowName>
              <Cell $bg={LILAC} />
              <Cell />
              <Cell />
              <DotsCell $bg={PURPLE}><Dots color="#d26ad6" /></DotsCell>
              <Cell />
              <RowName $bg={LILAC}><Text $size={10} $ls={0.6}>SUM_2</Text></RowName>
              <Cell $bg={LILAC} />
              <Cell />
              <Cell />
              <Cell />
              <Cell $bg={PURPLE}><Text $size={10} $ls={0.2} $color="#fff">PND</Text></Cell>
            </Matrix>
          </Canvas>
        </Editor>
      </Workspace>

      <ContextMenu>
        <MenuItem><ItemIcon><Chevron /></ItemIcon><Text $size={12} $ls={0.2}>Remove from table view</Text></MenuItem>
        <MenuItem $selected><ItemIcon><FeedIcon /></ItemIcon><Text $size={12} $ls={0.42}>Feed to others</Text></MenuItem>
        <MenuRule $top={2} $bottom={1} />
        <MenuItem><ItemIcon><CopyIcon /></ItemIcon><Text $size={12} $ls={0.4}>Copy</Text><Shortcut>Ctrl-C</Shortcut></MenuItem>
        <MenuItem $disabled><ItemIcon><PasteIcon /></ItemIcon><Text $size={12} $ls={0.5}>Paste</Text><Shortcut $disabled>Ctrl-V</Shortcut></MenuItem>
        <MenuItem><ItemIcon><TrashIcon /></ItemIcon><Text $size={12} $ls={0.2}>Delete inhibition link</Text><Shortcut>Delete</Shortcut></MenuItem>
        <MenuRule $top={1} $bottom={1} />
        <MenuItem><ItemIcon /><Text $size={12} $ls={0.25}>Show/Hide columns</Text></MenuItem>
      </ContextMenu>
      <Tooltip><Text $size={12} $ls={0.42}>Feed to others</Text></Tooltip>
    </Window>
  );
}
